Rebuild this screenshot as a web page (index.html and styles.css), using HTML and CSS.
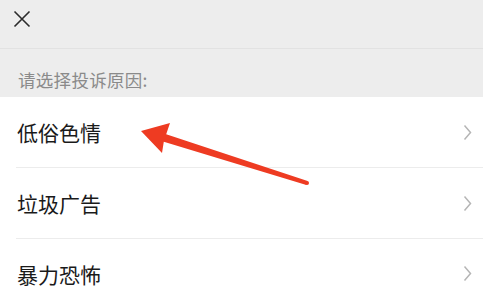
FILE: index.html
```html
<!DOCTYPE html>
<html lang="zh-CN">
<head>
    <meta charset="UTF-8">
    <meta name="viewport" content="width=device-width, initial-scale=1.0">
    <title>投诉</title>
    <link rel="stylesheet" href="styles.css">
</head>
<body>
    <div class="page">
        <div class="top-bar">
            <button class="close-btn" type="button" aria-label="关闭">
                <svg width="18" height="18" viewBox="0 0 18 18">
                    <path d="M1.5 1.5 L16.5 16.5 M16.5 1.5 L1.5 16.5" stroke="#2b2b2b" stroke-width="1.6" fill="none"/>
                </svg>
            </button>
        </div>
        <p class="section-title">请选择投诉原因:</p>
        <ul class="reason-list">
            <li class="reason-item"><span>低俗色情</span><svg class="chevron" width="9" height="17" viewBox="0 0 9 17"><polyline points="1.5,1.5 7.5,8.5 1.5,15.5" fill="none" stroke="#b5b5b5" stroke-width="1.5"/></svg></li>
            <li class="reason-item"><span>垃圾广告</span><svg class="chevron" width="9" height="17" viewBox="0 0 9 17"><polyline points="1.5,1.5 7.5,8.5 1.5,15.5" fill="none" stroke="#b5b5b5" stroke-width="1.5"/></svg></li>
            <li class="reason-item"><span>暴力恐怖</span><svg class="chevron" width="9" height="17" viewBox="0 0 9 17"><polyline points="1.5,1.5 7.5,8.5 1.5,15.5" fill="none" stroke="#b5b5b5" stroke-width="1.5"/></svg></li>
        </ul>
        <svg class="pointer-arrow" width="483" height="307" viewBox="0 0 483 307">
            <polygon points="141,131 170,123 166.2,134.2 307.6,181.1 306.4,184.9 163.8,141.8 162,153" fill="#ee3b22"/>
            <circle cx="307" cy="183" r="2" fill="#ee3b22"/>
        </svg>
    </div>
</body>
</html>
```

FILE: styles.css
```css
body {
    margin: 0;
    background-color: #ededed;
    font-family: 'Noto Sans CJK SC', 'Noto Sans', sans-serif;
}

.page {
    position: relative;
    height: 307px;
    overflow: hidden;
}

.top-bar {
    height: 48px;
    border-bottom: 1px solid #e2e2e2;
    display: flex;
    align-items: center;
}

.close-btn {
    background: none;
    border: none;
    padding: 0;
    margin-left: 13px;
    margin-top: -10px;
    width: 18px;
    height: 18px;
    cursor: pointer;
}

.section-title {
    margin: 0;
    height: 48px;
    line-height: 62px;
    padding-left: 18px;
    font-size: 17.5px;
    letter-spacing: 0.3px;
    color: #8a8a8a;
}

.reason-list {
    list-style: none;
    margin: 0;
    padding: 0;
    background-color: #fff;
}

.reason-item {
    display: flex;
    align-items: center;
    justify-content: space-between;
    height: 70px;
    margin-left: 16px;
    padding-left: 1px;
    padding-right: 11px;
    border-bottom: 1px solid #ececec;
    font-size: 21px;
    color: #1a1a1a;
}

.reason-item:last-child {
    height: 69px;
}

.pointer-arrow {
    position: absolute;
    top: 0;
    left: 0;
    pointer-events: none;
}
```
